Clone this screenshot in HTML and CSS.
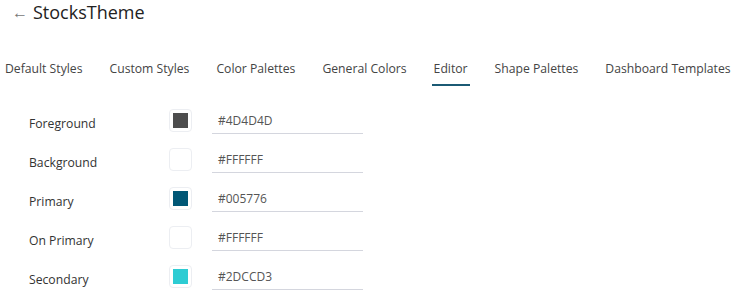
FILE: index.html
```html
<!DOCTYPE html>
<html lang="en">
<head>
    <meta charset="UTF-8">
    <meta name="viewport" content="width=device-width, initial-scale=1.0">
    <title>StocksTheme</title>
    <link rel="stylesheet" href="styles.css">
</head>
<body>
    <div class="header">
        <span class="back">&larr;</span>
        <h1>StocksTheme</h1>
    </div>
    <div class="tabs">
        <div class="tab">Default Styles</div>
        <div class="tab">Custom Styles</div>
        <div class="tab">Color Palettes</div>
        <div class="tab">General Colors</div>
        <div class="tab active">Editor</div>
        <div class="tab">Shape Palettes</div>
        <div class="tab">Dashboard Templates</div>
    </div>
    <div class="editor">
        <div class="row">
            <label>Foreground</label>
            <span class="swatch"><span style="background:#4D4D4D"></span></span>
            <div class="hex">#4D4D4D</div>
        </div>
        <div class="row">
            <label>Background</label>
            <span class="swatch"><span style="background:#FFFFFF"></span></span>
            <div class="hex">#FFFFFF</div>
        </div>
        <div class="row">
            <label>Primary</label>
            <span class="swatch"><span style="background:#005776"></span></span>
            <div class="hex">#005776</div>
        </div>
        <div class="row">
            <label>On Primary</label>
            <span class="swatch"><span style="background:#FFFFFF"></span></span>
            <div class="hex">#FFFFFF</div>
        </div>
        <div class="row">
            <label>Secondary</label>
            <span class="swatch"><span style="background:#2DCCD3"></span></span>
            <div class="hex">#2DCCD3</div>
        </div>
    </div>
</body>
</html>
```

FILE: styles.css
```css
body {
    margin: 0;
    background: #fff;
    font-family: "Open Sans", "Noto Sans", sans-serif;
    color: #333;
}
.header {
    display: flex;
    align-items: center;
    height: 24px;
    padding-left: 12px;
}
.back {
    font-size: 16px;
    color: #777;
    width: 21px;
}
h1 {
    margin: 0;
    font-size: 18px;
    font-weight: 400;
    color: #222;
}
.tabs {
    display: flex;
    margin-top: 32px;
    padding-left: 5px;
    gap: 27px;
    white-space: nowrap;
}
.tab {
    flex-shrink: 0;
    font-size: 12.2px;
    color: #444;
    padding: 4px 0 7px;
    border-bottom: 2px solid transparent;
}
.tab.active {
    border-bottom-color: #1b5a74;
    margin: 0 -2px;
    padding-left: 2px;
    padding-right: 2px;
}
.editor {
    padding: 15px 0 0 29px;
}
.row {
    display: flex;
    align-items: center;
    height: 39px;
}
.row label {
    width: 140px;
    font-size: 12.2px;
    color: #333;
    padding-top: 5px;
}
.swatch {
    box-sizing: border-box;
    width: 23px;
    height: 23px;
    padding: 3px;
    border: 1px solid #eceef2;
    border-radius: 4px;
    background: #fff;
}
.swatch span {
    display: block;
    width: 100%;
    height: 100%;
}
.hex {
    margin-left: 20px;
    width: 145px;
    padding: 0 0 4px 6px;
    margin-top: 4px;
    font-size: 12px;
    color: #555;
    border-bottom: 1px solid #d4d6de;
}
```
